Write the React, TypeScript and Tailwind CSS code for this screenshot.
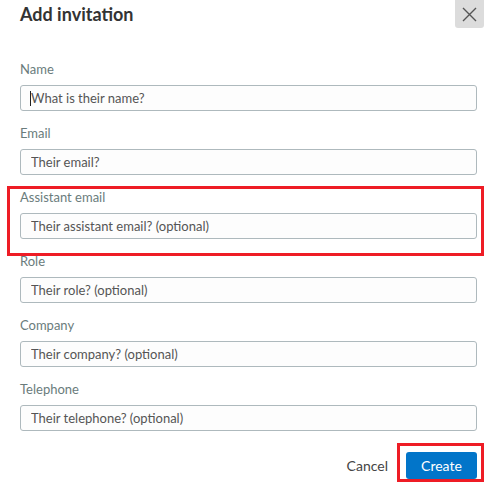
import React from 'react';

// one field in the invitation form
const fields = [
  { label: 'Name', placeholder: 'What is their name?' },
  { label: 'Email', placeholder: 'Their email?' },
  { label: 'Assistant email', placeholder: 'Their assistant email? (optional)' },
  { label: 'Role', placeholder: 'Their role? (optional)' },
  { label: 'Company', placeholder: 'Their company? (optional)' },
  { label: 'Telephone', placeholder: 'Their telephone? (optional)' },
];

const App = () => {
  return (
    <div className="w-[494px] h-[483px] bg-white overflow-hidden" style={{ fontFamily: 'Lato, "Open Sans", sans-serif' }}>
      {/* header */}
      <div className="flex justify-between items-start pl-5 pr-[10px]">
        <h1 className="text-[18px] leading-[29px] font-bold text-[#333]">Add invitation</h1>
        <button className="w-[29px] h-[28px] bg-[#dcdcdc] rounded-b-[3px] flex items-center justify-center text-[#555]">
          <svg width="17" height="17" viewBox="0 0 17 17" fill="none" stroke="currentColor" strokeWidth="1.4">
            <path d="M2 2 L15 15 M15 2 L2 15" />
          </svg>
        </button>
      </div>

      <div className="ml-5 w-[457px] mt-[32px] flex flex-col gap-[14px]">
        {fields.map((f, i) => (
          <div key={f.label} className="relative">
            <label className="block text-[13px] leading-4 text-[#6a7c7c] mb-2">{f.label}</label>
            <div className="relative">
              <input
                readOnly
                placeholder={f.placeholder}
                className="w-full h-[26px] rounded-[3px] border border-[#aeb9bd] bg-[#fdfdfd] pl-[10px] text-[13px] text-[#555] placeholder:text-[#555] outline-none"
              />
              {i === 0 && <span className="absolute left-[10px] top-[6px] w-px h-[15px] bg-[#222]" />}
            </div>
            {i === 2 && (
              <div className="absolute -left-[13px] -top-[3px] -right-[7px] -bottom-[17px] border-[3px] border-[#ee1c25] pointer-events-none" />
            )}
          </div>
        ))}
      </div>

      {/* footer */}
      <div className="ml-5 w-[457px] mt-[21px] flex justify-end items-center gap-[18px]">
        <button className="text-[14px] text-[#444]">Cancel</button>
        <div className="relative">
          <button className="w-[71px] h-[27px] rounded-[3px] bg-[#0275c9] text-white text-[14px]">Create</button>
          <div className="absolute -left-[9px] -top-[9px] -right-[7px] -bottom-[3px] border-[3px] border-[#ee1c25] pointer-events-none" />
        </div>
      </div>
    </div>
  );
};

export default App;
